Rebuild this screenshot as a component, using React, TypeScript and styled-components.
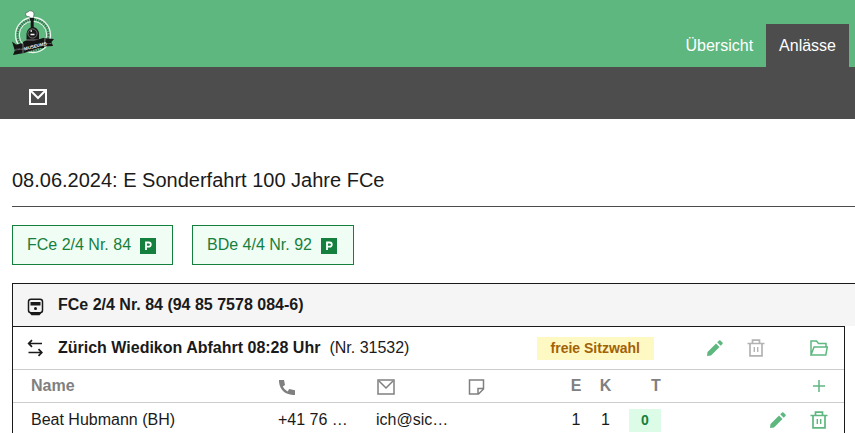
import React from "react";
import styled, { createGlobalStyle } from "styled-components";

const GlobalStyle = createGlobalStyle`
  *, *::before, *::after { box-sizing: border-box; }
  body {
    margin: 0;
    background: #fff;
    color: #1a1a1a;
    font-family: "Liberation Sans", Arial, sans-serif;
    font-size: 16px;
    line-height: 24px;
    overflow-x: hidden;
  }
`;

const Header = styled.header`
  display: flex;
  justify-content: space-between;
  align-items: flex-end;
  height: 67px;
  padding: 0 6px 0 12px;
  background: #5fb780;
`;

const LogoLink = styled.a`
  display: block;
  align-self: flex-start;
  padding-top: 9px;
  svg { display: block; }
`;

const Nav = styled.nav`
  display: flex;
`;

const Tab = styled.a<{ $active?: boolean }>`
  padding: 10px 13px 9px;
  color: #fff;
  text-decoration: none;
  background: ${(p) => (p.$active ? "#4d4d4d" : "transparent")};
`;

const Toolbar = styled.div`
  display: flex;
  align-items: center;
  height: 52px;
  padding: 8px 28px 0;
  background: #4d4d4d;
`;

const IconButton = styled.button<{ $color?: string; $end?: boolean }>`
  display: block;
  margin: 0 0 0 ${(p) => (p.$end ? "auto" : "0")};
  padding: 0;
  border: 0;
  background: none;
  color: ${(p) => p.$color ?? "#5fb780"};
  cursor: pointer;
  &:disabled { cursor: default; }
  svg { display: block; }
`;

const Main = styled.main`
  padding: 48px 0 0 12px;
`;

const Title = styled.h1`
  margin: 0 0 18px;
  padding-bottom: 13px;
  border-bottom: 1px solid #4d4d4d;
  font-size: 20px;
  line-height: 26px;
  font-weight: 400;
`;

const Vehicles = styled.div`
  display: flex;
  gap: 19px;
  margin-bottom: 18px;
`;

const VehicleButton = styled.button`
  display: flex;
  align-items: center;
  gap: 9px;
  height: 40px;
  padding: 0 16px 0 14px;
  border: 1px solid #15803d;
  background: #f0fdf4;
  color: #15803d;
  font: inherit;
  cursor: pointer;
  svg { margin-top: 2px; }
`;

const Panel = styled.section`
  border: 1px solid #1a1a1a;
  border-width: 1px 0 0 1px;
`;

const PanelHead = styled.h2`
  display: flex;
  align-items: center;
  gap: 13px;
  height: 42px;
  margin: 0;
  padding-left: 14px;
  background: #f5f5f5;
  font-size: 16px;
  svg { margin-top: 3px; }
`;

const Trip = styled.div`
  margin-right: 10px;
  border: 1px solid #1a1a1a;
  border-width: 1px 1px 0 0;
`;

const TripHead = styled.div`
  display: flex;
  align-items: center;
  height: 42px;
  padding: 0 16px 0 14px;
`;

const TripTitle = styled.h3`
  margin: 0 9px 0 13px;
  font-size: 16px;
`;

const Badge = styled.span<{ $tone: "yellow" | "green" }>`
  display: inline-block;
  padding: 0 ${(p) => (p.$tone === "yellow" ? "14px" : "12px")};
  background: ${(p) => (p.$tone === "yellow" ? "#fef9c3" : "#dcfce7")};
  color: ${(p) => (p.$tone === "yellow" ? "#a16207" : "#15803d")};
  font-size: 14px;
  line-height: 23px;
  font-weight: 700;
`;

const TripActions = styled.div`
  display: flex;
  align-items: center;
  margin-left: 52px;
  gap: 23px;
  button:last-child { margin-left: 22px; }
`;

const Spacer = styled.div`
  flex: 1;
`;

const Table = styled.table`
  width: 100%;
  table-layout: fixed;
  border-collapse: collapse;
`;

const Col = styled.col<{ $w?: number }>`
  width: ${(p) => (p.$w ? `${p.$w}px` : "auto")};
`;

const Th = styled.th<{ $align?: string }>`
  height: 33px;
  padding: 0;
  border-top: 1px solid #ccc;
  color: #808080;
  text-align: ${(p) => p.$align ?? "left"};
  &:first-child { padding-left: 18px; }
`;

const IconTh = styled(Th)`
  padding-top: 2px;
  svg { display: block; }
`;

const Td = styled.td<{ $align?: string }>`
  height: 34px;
  padding: 0;
  border-top: 1px solid #ccc;
  text-align: ${(p) => p.$align ?? "left"};
  white-space: nowrap;
  overflow: hidden;
  text-overflow: ellipsis;
  &:first-child { padding-left: 18px; }
`;

const SeatTd = styled(Td)`
  padding-left: 9px;
`;

const EditTd = styled(Td)`
  padding-right: 23px;
`;

const MailIcon = ({ weight = 1.5 }: { weight?: number }) => (
  <svg width="20" height="20" viewBox="0 0 20 20" fill="none" stroke="currentColor" strokeWidth={weight} aria-hidden>
    <path d="M2 3h16v14H2z" />
    <path d="M3 4l7 7 7-7" />
  </svg>
);

const ParkingIcon = () => (
  <svg width="16" height="16" viewBox="0 0 16 16" aria-hidden>
    <path fill="currentColor" d="M0 0h16v16H0z" />
    <path fill="none" stroke="#fff" strokeWidth="1.8" d="M6 12V4.500h2.700a2 2 0 0 1 0 4.200H6" />
  </svg>
);

const TrainIcon = () => (
  <svg width="18" height="18" viewBox="0 0 18 18" aria-hidden>
    <rect x="1.500" y="1.300" width="14" height="13.400" rx="2.500" fill="none" stroke="currentColor" strokeWidth="1.500" />
    <path fill="currentColor" d="M3.500 4h10v3.500h-10zM3 14.500h11v1l-1.500 1.700h-8L3 15.500z" />
    <circle cx="8.500" cy="10.500" r="1.500" fill="currentColor" />
  </svg>
);

const SwapIcon = () => (
  <svg width="18" height="18" viewBox="0 0 18 18" fill="none" stroke="currentColor" strokeWidth="1.700" aria-hidden>
    <path d="M15 4.500H2M5 1.200 1.700 4.500 5 7.800M1.500 13.500H15M11.500 10.200l3.300 3.300-3.300 3.300" />
  </svg>
);

const PencilIcon = () => (
  <svg width="18" height="18" viewBox="0 0 18 18" fill="currentColor" aria-hidden>
    <path d="m1 17 .5-4L10 4.500l3.500 3.500L5 16.500zM11.200 3.300l1.800-1.800q.7-.6 1.400 0l2.100 2.100q.6.7 0 1.400l-1.800 1.800z" />
  </svg>
);

const TrashIcon = () => (
  <svg width="18" height="18" viewBox="0 0 18 18" fill="none" stroke="currentColor" strokeWidth="1.700" aria-hidden>
    <path d="M.5 4.500h17M3 4.500v12.300h12V4.500M5.500 4.500V1.200h7v3.300" />
    <path d="M7.300 8v5M10.700 8v5" strokeWidth="1.400" />
  </svg>
);

const FolderIcon = () => (
  <svg width="18" height="18" viewBox="0 0 18 18" fill="none" stroke="currentColor" strokeWidth="1.500" aria-hidden>
    <path d="M1 16V2h5.500l2 2.500h7.500v3M1 16 4 8h13.300l-1.500 8z" />
  </svg>
);

const PlusIcon = () => (
  <svg width="18" height="18" viewBox="0 0 18 18" fill="none" stroke="currentColor" strokeWidth="1.500" aria-hidden>
    <path d="M9 3v12M3 9h12" />
  </svg>
);

const PhoneIcon = () => (
  <svg width="18" height="18" viewBox="0 0 18 18" fill="currentColor" aria-hidden>
    <path d="M1 2h5l1 5-2.200 1.500q1.500 3.300 4.800 4.900L11.200 11l5.800 1.200V17h-2Q2.500 16 1 4z" />
  </svg>
);

const NoteIcon = () => (
  <svg width="18" height="18" viewBox="0 0 18 18" fill="none" stroke="currentColor" strokeWidth="1.500" aria-hidden>
    <path d="M1.500 2h14v9l-5 5h-9zM10 16v-5.500h5.500" />
  </svg>
);

const Logo = () => (
  <svg width="43" height="47" viewBox="0 0 43 47" role="img" aria-label="Zürcher Museums-Bahn">
    <circle cx="21" cy="26" r="17.500" fill="none" stroke="#eaf6ee" strokeWidth="1.300" />
    <circle cx="21" cy="26" r="15.500" fill="none" stroke="#3c5a46" strokeWidth="1.800" strokeDasharray="1.200 1.200" />
    <circle cx="21" cy="26" r="13.700" fill="none" stroke="#eaf6ee" strokeWidth="1" />
    <path fill="#fff" stroke="#26382c" strokeWidth=".5" d="M18.300 9q-.4-1.800-2.600-1.500-2.300-.2-2.100-2.300Q13.500 3 16 3q1.300-1.800 3.500-1 2.800.4 2.500 3-.2 2.500-.8 4z" />
    <path fill="#151515" d="M17.500 9h5l-.8 3v6q5 1.500 5.300 7v5l5 3v6H11v-6l3.500-2v-6q.6-5 4.200-6.500V12z" />
    <circle cx="20.500" cy="24.500" r="4.600" fill="#1b1b1b" stroke="#858585" strokeWidth=".8" />
    <path stroke="#fff" strokeWidth="1.400" d="M18.500 25.500h4M18.500 22h1.500" />
    <path stroke="#999" strokeWidth=".8" d="M13 31h14" />
    <path fill="#151515" d="M0 32.500 4 35.500l7-1q11-2 20-5.500l11 1-2.500 3 1.500 4-9 .5q-10 3-20 6.500L1 46l1.800-4.500z" />
    <path fill="none" stroke="#dfe9e2" strokeWidth=".5" d="M11 34.500v9.500M33 29.300l-.5 8" />
    <text x="12.500" y="41.500" fill="#fff" fontFamily="Liberation Sans" fontSize="4.500" fontWeight="700" transform="rotate(-14 12.500 41.500)">MUSEUMS</text>
    <text x="3" y="41.500" fill="#cfcfcf" fontFamily="Liberation Sans" fontSize="2" transform="rotate(-6 3 41.500)">ZÜRCHER</text>
    <text x="34" y="35" fill="#cfcfcf" fontFamily="Liberation Sans" fontSize="2">BAHN</text>
  </svg>
);

export default function App() {
  return (
    <>
      <GlobalStyle />
      <Header>
        <LogoLink href="#start"><Logo /></LogoLink>
        <Nav>
          <Tab href="#uebersicht">Übersicht</Tab>
          <Tab href="#anlaesse" $active aria-current="page">Anlässe</Tab>
        </Nav>
      </Header>
      <Toolbar>
        <IconButton $color="#fff" aria-label="E-Mail senden"><MailIcon weight={2} /></IconButton>
      </Toolbar>
      <Main>
        <Title>08.06.2024: E Sonderfahrt 100 Jahre FCe</Title>
        <Vehicles>
          <VehicleButton>FCe 2/4 Nr. 84 <ParkingIcon /></VehicleButton>
          <VehicleButton>BDe 4/4 Nr. 92 <ParkingIcon /></VehicleButton>
        </Vehicles>
        <Panel>
          <PanelHead><TrainIcon />FCe 2/4 Nr. 84 (94 85 7578 084-6)</PanelHead>
          <Trip>
            <TripHead>
              <SwapIcon />
              <TripTitle>Zürich Wiedikon Abfahrt 08:28 Uhr</TripTitle>
              <span>(Nr. 31532)</span>
              <Spacer />
              <Badge $tone="yellow">freie Sitzwahl</Badge>
              <TripActions>
                <IconButton aria-label="Fahrt bearbeiten"><PencilIcon /></IconButton>
                <IconButton $color="#b3b3b3" disabled aria-label="Fahrt löschen"><TrashIcon /></IconButton>
                <IconButton aria-label="Ordner öffnen"><FolderIcon /></IconButton>
              </TripActions>
            </TripHead>
            <Table>
              <colgroup>
                <Col /><Col $w={98} /><Col $w={92} /><Col $w={93} /><Col $w={30} /><Col $w={29} /><Col $w={72} /><Col $w={118} /><Col $w={34} />
              </colgroup>
              <thead>
                <tr>
                  <Th scope="col">Name</Th>
                  <IconTh scope="col" aria-label="Telefon"><PhoneIcon /></IconTh>
                  <IconTh scope="col" aria-label="E-Mail"><MailIcon /></IconTh>
                  <IconTh scope="col" aria-label="Notiz"><NoteIcon /></IconTh>
                  <Th scope="col" $align="center">E</Th>
                  <Th scope="col" $align="center">K</Th>
                  <Th scope="col" $align="center">T</Th>
                  <Th />
                  <Th><IconButton aria-label="Person hinzufügen"><PlusIcon /></IconButton></Th>
                </tr>
              </thead>
              <tbody>
                <tr>
                  <Td>Beat Hubmann (BH)</Td>
                  <Td>+41 76 …</Td>
                  <Td>ich@sic…</Td>
                  <Td />
                  <Td $align="center">1</Td>
                  <Td $align="center">1</Td>
                  <SeatTd><Badge $tone="green">0</Badge></SeatTd>
                  <EditTd><IconButton $end aria-label="Person bearbeiten"><PencilIcon /></IconButton></EditTd>
                  <Td><IconButton aria-label="Person löschen"><TrashIcon /></IconButton></Td>
                </tr>
              </tbody>
            </Table>
          </Trip>
        </Panel>
      </Main>
    </>
  );
}
